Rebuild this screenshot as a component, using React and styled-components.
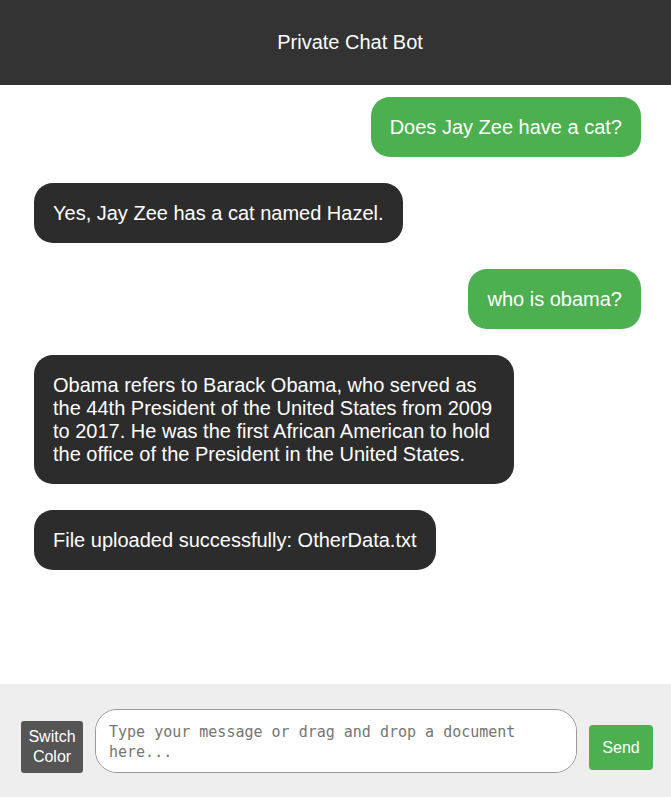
import React, { useState } from "react";
import styled, { createGlobalStyle } from "styled-components";

const GlobalStyle = createGlobalStyle`
    html, body {
        margin: 0;
        padding: 0;
        height: 100%;
    }
    body {
        font-family: "Liberation Sans", Arial, sans-serif;
        background: #fff;
    }
    #root {
        height: 100%;
    }
`;

const Page = styled.div`
    display: flex;
    flex-direction: column;
    height: 100vh;
`;

const Header = styled.header`
    height: 85px;
    flex-shrink: 0;
    background: #333;
    color: #fff;
    display: flex;
    align-items: center;
    justify-content: center;
    padding-left: 29px;
    font-size: 20px;
`;

const MessageList = styled.div`
    flex: 1;
    overflow-y: auto;
    display: flex;
    flex-direction: column;
    gap: 26px;
    padding: 12px 30px 12px 34px;
`;

const Bubble = styled.div`
    align-self: ${(props) => (props.$user ? "flex-end" : "flex-start")};
    background: ${(props) => (props.$user ? "#4caf50" : "#2c2c2c")};
    color: #fff;
    font-size: 20px;
    line-height: 23px;
    padding: 18.5px 19px;
    border-radius: 19px;
    max-width: 480px;
    box-sizing: border-box;
`;

const Footer = styled.footer`
    height: 113px;
    flex-shrink: 0;
    background: #eee;
    display: flex;
    align-items: flex-end;
    gap: 12px;
    padding: 0 18px 24px 21px;
    box-sizing: border-box;
`;

const SwitchButton = styled.button`
    width: 62px;
    height: 52px;
    flex-shrink: 0;
    background: #555;
    color: #fff;
    border: none;
    border-radius: 3px;
    font-family: "Liberation Sans", Arial, sans-serif;
    font-size: 16px;
    line-height: 20px;
    padding: 0;
    cursor: pointer;
`;

const Input = styled.textarea`
    flex: 1;
    height: 64px;
    box-sizing: border-box;
    border: 1px solid #999;
    border-radius: 22px;
    padding: 12px 13px;
    font-family: "DejaVu Sans Mono", "Liberation Mono", monospace;
    font-size: 15px;
    line-height: 20px;
    resize: none;
    outline: none;
    background: #fff;
    &::placeholder {
        color: #757575;
    }
`;

const SendButton = styled.button`
    width: 64px;
    height: 45px;
    flex-shrink: 0;
    margin-bottom: 3px;
    background: #4caf50;
    color: #fff;
    border: none;
    border-radius: 4px;
    font-family: "Liberation Sans", Arial, sans-serif;
    font-size: 16px;
    cursor: pointer;
`;

const messages = [
    { user: true, text: "Does Jay Zee have a cat?" },
    { user: false, text: "Yes, Jay Zee has a cat named Hazel." },
    { user: true, text: "who is obama?" },
    {
        user: false,
        text: "Obama refers to Barack Obama, who served as the 44th President of the United States from 2009 to 2017. He was the first African American to hold the office of the President in the United States."
    },
    { user: false, text: "File uploaded successfully: OtherData.txt" }
];

const App = () => {
    const [input, setInput] = useState("");

    return (
        <Page>
            <GlobalStyle />
            <Header>Private Chat Bot</Header>
            <MessageList>
                {messages.map((m, i) => (
                    <Bubble key={i} $user={m.user}>
                        {m.text}
                    </Bubble>
                ))}
            </MessageList>
            <Footer>
                <SwitchButton type="button">
                    Switch
                    <br />
                    Color
                </SwitchButton>
                <Input
                    value={input}
                    onChange={(e) => setInput(e.target.value)}
                    placeholder="Type your message or drag and drop a document here..."
                />
                <SendButton type="button">Send</SendButton>
            </Footer>
        </Page>
    );
};

export default App;
